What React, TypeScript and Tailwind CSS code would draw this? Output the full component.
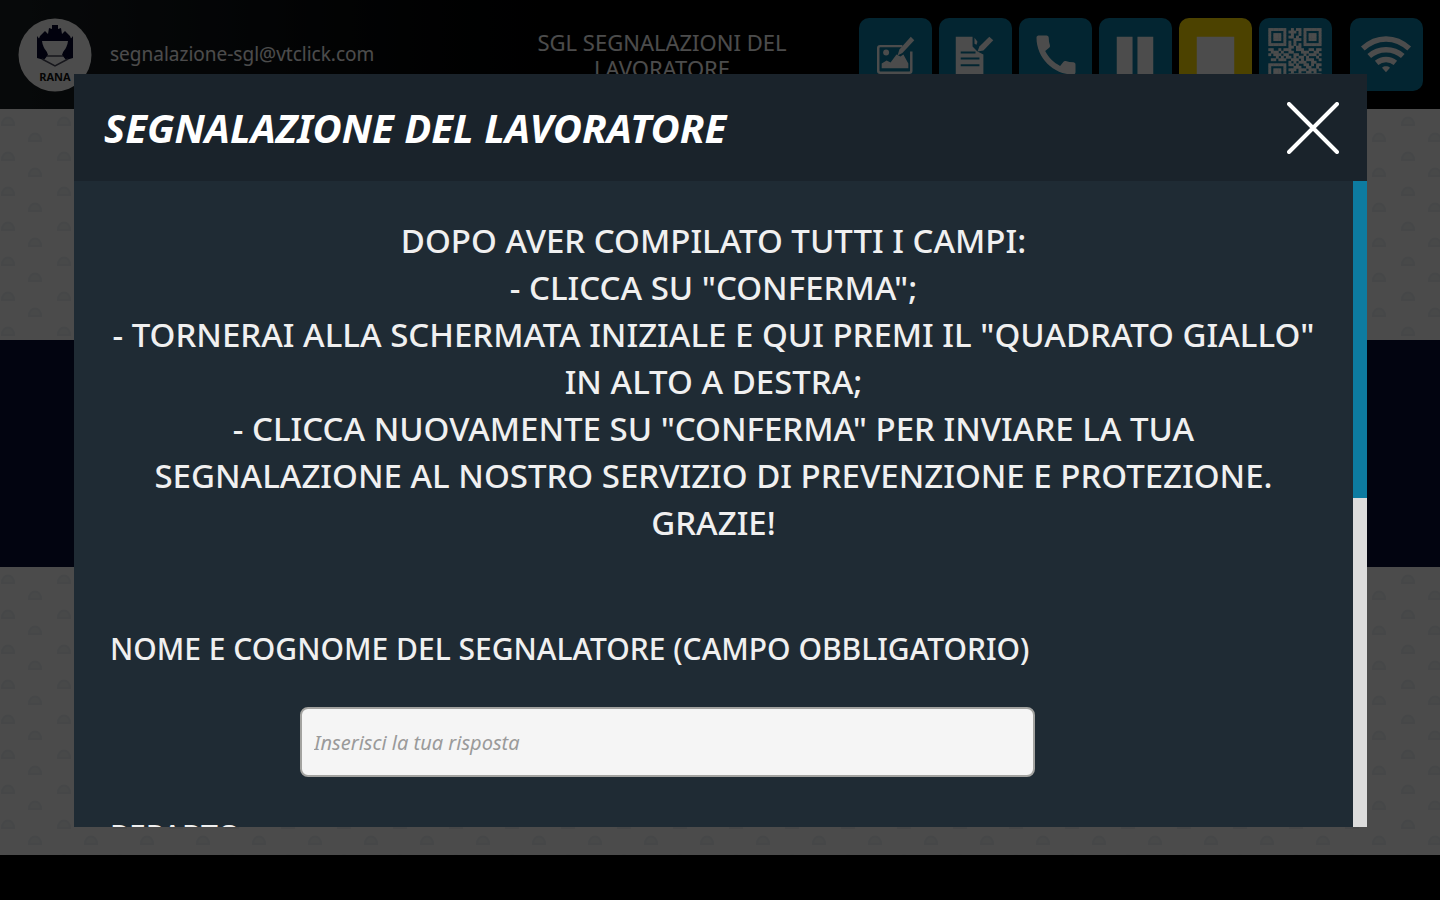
import React from "react";
import { MdCall } from "react-icons/md";

const INSTRUCTIONS = [
  "DOPO AVER COMPILATO TUTTI I CAMPI:",
  '- CLICCA SU "CONFERMA";',
  '- TORNERAI ALLA SCHERMATA INIZIALE E QUI PREMI IL "QUADRATO GIALLO"',
  "IN ALTO A DESTRA;",
  '- CLICCA NUOVAMENTE SU "CONFERMA" PER INVIARE LA TUA',
  "SEGNALAZIONE AL NOSTRO SERVIZIO DI PREVENZIONE E PROTEZIONE.",
  "GRAZIE!",
];

function Logo() {
  return (
    <svg viewBox="0 0 74 74" className="size-[74px] shrink-0" role="img" aria-label="RANA">
      <circle cx="37" cy="37" r="36.5" fill="#fff" />
      <g fill="#04062e">
        <path d="M22 18l5-5 3 3 1-6 3 1V7h6v4l3-1 1 6 3-3 5 5 2 5H20z" />
        <path d="M19 18l4 5h28l4-5v22l-7 2-4-5 5-14H25l5 14-4 5-7-2z" />
      </g>
      <path d="M24 23h26c-1 8-6 14-13 14S25 31 24 23z" fill="#fff" />
      <path d="M25 43l7-6h10l7 6-12 6z" fill="#fff" />
      <path d="M24 41l13 7 13-7M29 38h16" fill="none" stroke="#4a4a5c" strokeWidth="1.5" />
      <text x="37" y="63" textAnchor="middle" fontSize="11" fontWeight="700" fill="#111" fontFamily="Noto Sans, sans-serif">
        RANA
      </text>
    </svg>
  );
}

function PhotoEditIcon() {
  return (
    <svg viewBox="0 0 74 74" className="size-full" fill="none">
      <path d="M44 28.500H21.500a2 2 0 0 0-2 2v23a2 2 0 0 0 2 2H51a2 2 0 0 0 2-2V34" stroke="#fff" strokeWidth="2.500" />
      <path d="M23 51v-5l5-3 4 2 6-8 4 2 3-2 5 9v5z" fill="#fff" />
      <circle cx="27.500" cy="35" r="3" fill="#fff" />
      <path d="M39 38l2-6 11.500-13 3.500 3.500L44 35.500z" fill="#fff" />
    </svg>
  );
}

function NoteEditIcon() {
  return (
    <svg viewBox="0 0 74 74" className="size-full" fill="none">
      <path d="M17 19h17v10l5 5 6 3v20H17z" fill="#fff" />
      <path d="M36 20l3 4-1 3-2-1z" fill="#fff" />
      <path d="M39 34l2-5 10-10 4 3.500L45 33z" fill="#fff" />
      <path d="M22 35h15M22 41h19M22 48h19" stroke="#0b7da3" strokeWidth="2" />
    </svg>
  );
}

function PauseIcon() {
  return (
    <svg viewBox="0 0 74 74" className="size-full" fill="#fff">
      <path d="M18 19h16v38H18zM39 19h16v38H39z" />
    </svg>
  );
}

function StopIcon() {
  return (
    <svg viewBox="0 0 74 74" className="size-full" fill="#fff">
      <path d="M18 19h38v38H18z" />
    </svg>
  );
}

const QR_ROWS = [
  "111111100101101111111",
  "100000101110101000001",
  "101110100100101011101",
  "101110101101001011101",
  "101110100011101011101",
  "100000101010001000001",
  "111111101010101111111",
  "000000001101100000000",
  "110010111001110011011",
  "011101001100011100110",
  "101110110011001011101",
  "000101011010110100010",
  "011011100111010111001",
  "000000001010111001100",
  "111111101101001101011",
  "100000100011100110010",
  "101110101110111011101",
  "101110100100100110100",
  "101110101011011001011",
  "100000100110101110010",
  "111111101001110101101",
];

function QrIcon() {
  return (
    <svg viewBox="-3.700 -4 29 29" className="size-full" fill="#fff">
      {QR_ROWS.flatMap((row, y) =>
        row.split("").map((bit, x) => (bit === "1" ? <rect key={`${x}-${y}`} x={x} y={y} width="1.150" height="1.150" /> : null)),
      )}
    </svg>
  );
}

function WifiIcon() {
  return (
    <svg viewBox="0 0 74 74" className="size-full" fill="none" stroke="#fff" strokeWidth="5.500">
      <path d="M13 31C27 18 46 18 60 31" />
      <path d="M19.500 38.500C29 30 44 30 53.500 38.500" />
      <path d="M27 45.500C32.500 41 40.500 41 46 45.500" />
      <path d="M36.500 55l-4-4.500c2-2 6-2 8 0z" fill="#fff" stroke="none" />
    </svg>
  );
}

function ToolButton({ label, yellow, children }: { label: string; yellow?: boolean; children: React.ReactNode }) {
  return (
    <button
      type="button"
      aria-label={label}
      className={`flex size-[73px] items-center justify-center rounded-[10px] text-white ${yellow ? "bg-[#ffdc00]" : "bg-[#0b7da3]"}`}
    >
      {children}
    </button>
  );
}

function PatternBand({ id, className }: { id: string; className: string }) {
  return (
    <div className={`bg-[#fbfbfb] ${className}`}>
      <svg className="size-full" aria-hidden="true">
        <defs>
          <pattern id={id} width="56" height="35" patternUnits="userSpaceOnUse">
            <g fill="#f1f4f6" stroke="#e9eff2" strokeWidth="2">
              <path d="M2 16c0-10 12-10 12 0z" />
              <path d="M29 32c0-10 12-10 12 0z" />
            </g>
          </pattern>
        </defs>
        <rect width="100%" height="100%" fill={`url(#${id})`} />
      </svg>
    </div>
  );
}

export default function App() {
  return (
    <div className="relative flex h-screen flex-col overflow-hidden bg-black font-['Noto_Sans',sans-serif]">
      <header className="flex h-[109px] shrink-0 items-center bg-linear-to-r from-[#1a2024] to-black to-60% pr-[17px] pl-[18px]">
        <div className="flex flex-1 items-center gap-[18px]">
          <Logo />
          <span className="text-[19px] text-white">segnalazione-sgl@vtclick.com</span>
        </div>
        <h1 className="mr-[47px] w-[300px] text-center text-[22px] leading-[26px] text-white">SGL SEGNALAZIONI DEL LAVORATORE</h1>
        <nav className="flex shrink-0 gap-[7px]">
          <ToolButton label="Modifica immagine"><PhotoEditIcon /></ToolButton>
          <ToolButton label="Modifica nota"><NoteEditIcon /></ToolButton>
          <ToolButton label="Chiama"><MdCall className="size-[52px]" /></ToolButton>
          <ToolButton label="Pausa"><PauseIcon /></ToolButton>
          <ToolButton label="Invia" yellow><StopIcon /></ToolButton>
          <ToolButton label="Codice QR"><QrIcon /></ToolButton>
          <div className="pl-[11px]">
            <ToolButton label="Connessione"><WifiIcon /></ToolButton>
          </div>
        </nav>
      </header>

      <main className="flex min-h-0 flex-1 flex-col">
        <PatternBand id="helmets-top" className="h-[231px] shrink-0" />
        <div className="h-[227px] shrink-0 bg-[#081038]" />
        <PatternBand id="helmets-bottom" className="min-h-0 flex-1" />
      </main>
      <footer className="h-[45px] shrink-0 bg-black" />

      <div className="absolute inset-0 flex bg-black/70 pt-[74px] pr-[73px] pb-[73px] pl-[74px]">
        <section role="dialog" aria-labelledby="dialog-title" className="flex min-w-0 flex-1 flex-col bg-[#1f2b34]">
          <div className="flex h-[107px] shrink-0 items-center justify-between bg-[#1a232b] pr-7 pl-[30px]">
            <h2 id="dialog-title" className="text-[40px] font-bold text-white italic">
              SEGNALAZIONE DEL LAVORATORE
            </h2>
            <button type="button" aria-label="Chiudi" className="text-white">
              <svg viewBox="0 0 52 52" className="size-[52px]" fill="none" stroke="currentColor" strokeWidth="4" strokeLinecap="round">
                <path d="M2 2l48 48M50 2L2 50" />
              </svg>
            </button>
          </div>
          <div className="flex min-h-0 flex-1">
            <div className="min-w-0 flex-1 overflow-y-auto px-9 pt-9 text-[#f0f0f0] [scrollbar-width:none]">
              <p className="text-center text-[33px] leading-[47px] font-medium">
                {INSTRUCTIONS.map((line) => (
                  <span key={line} className="block">{line}</span>
                ))}
              </p>
              <form className="mt-[79px] flex w-[925px] max-w-full flex-col">
                <label htmlFor="nome" className="text-[30px] leading-[47px] font-medium whitespace-nowrap">
                  NOME E COGNOME DEL SEGNALATORE (CAMPO OBBLIGATORIO)
                </label>
                <input
                  id="nome"
                  type="text"
                  placeholder="Inserisci la tua risposta"
                  className="mt-[35px] h-[70px] w-[735px] self-end rounded-lg border-2 border-[#a3a3a0] bg-[#f5f5f5] px-3 text-xl text-black italic placeholder:text-[#9a9a9a]"
                />
                <label htmlFor="reparto" className="mt-[35px] text-[30px] leading-[47px] font-medium">
                  REPARTO
                </label>
                <input id="reparto" type="text" className="mt-[35px] h-[70px] w-[735px] self-end rounded-lg border-2 border-[#a3a3a0] bg-[#f5f5f5] px-3 text-xl text-black" />
              </form>
            </div>
            <div className="flex w-[14px] flex-col bg-[#dcdcdc]">
              <div className="h-[49%] bg-[#0d7ba0]" />
            </div>
          </div>
        </section>
      </div>
    </div>
  );
}
